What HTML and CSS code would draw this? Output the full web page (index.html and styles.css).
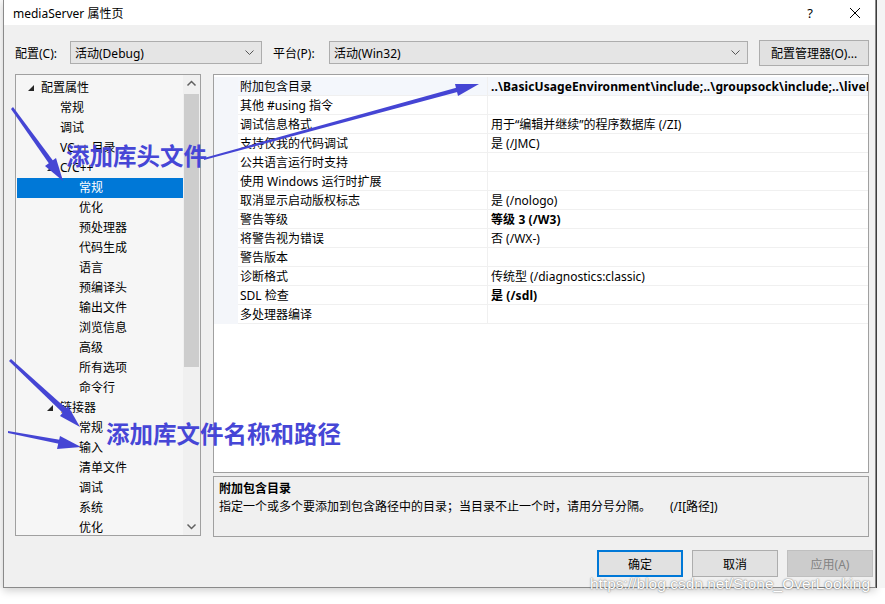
FILE: index.html
```html
<!DOCTYPE html>
<html lang="zh-CN">
<head>
    <meta charset="UTF-8">
    <title>mediaServer 属性页</title>
    <link rel="stylesheet" href="styles.css">
</head>
<body>
<div class="screen">
    <div class="backdrop-left"></div>

    <div class="window">
        <!-- title bar -->
        <div class="titlebar">
            <span class="title">mediaServer 属性页</span>
            <span class="title-help">?</span>
            <span class="title-close">
                <svg width="12" height="12" viewBox="0 0 12 12"><path d="M1 1 L11 11 M11 1 L1 11" stroke="#000" stroke-width="1"/></svg>
            </span>
        </div>

        <!-- config / platform row -->
        <div class="toolbar">
            <label class="field-label">配置(C):</label>
            <div class="combo combo-config">
                <span>活动(Debug)</span>
                <svg class="chevron" width="9" height="6" viewBox="0 0 9 6"><polyline points="0.5,0.5 4.5,4.5 8.5,0.5" fill="none" stroke="#555" stroke-width="1"/></svg>
            </div>
            <label class="field-label platform-label">平台(P):</label>
            <div class="combo combo-platform">
                <span>活动(Win32)</span>
                <svg class="chevron" width="9" height="6" viewBox="0 0 9 6"><polyline points="0.5,0.5 4.5,4.5 8.5,0.5" fill="none" stroke="#555" stroke-width="1"/></svg>
            </div>
            <button class="btn btn-manager">配置管理器(O)...</button>
        </div>

        <div class="main">
            <!-- tree -->
            <div class="tree">
                <div class="tree-list">
                    <div class="tree-item lvl1"><span class="caret"></span>配置属性</div>
                    <div class="tree-item lvl2">常规</div>
                    <div class="tree-item lvl2">调试</div>
                    <div class="tree-item lvl2">VC++ 目录</div>
                    <div class="tree-item lvl2"><span class="caret"></span>C/C++</div>
                    <div class="tree-item lvl3 selected">常规</div>
                    <div class="tree-item lvl3">优化</div>
                    <div class="tree-item lvl3">预处理器</div>
                    <div class="tree-item lvl3">代码生成</div>
                    <div class="tree-item lvl3">语言</div>
                    <div class="tree-item lvl3">预编译头</div>
                    <div class="tree-item lvl3">输出文件</div>
                    <div class="tree-item lvl3">浏览信息</div>
                    <div class="tree-item lvl3">高级</div>
                    <div class="tree-item lvl3">所有选项</div>
                    <div class="tree-item lvl3">命令行</div>
                    <div class="tree-item lvl2"><span class="caret"></span>链接器</div>
                    <div class="tree-item lvl3">常规</div>
                    <div class="tree-item lvl3">输入</div>
                    <div class="tree-item lvl3">清单文件</div>
                    <div class="tree-item lvl3">调试</div>
                    <div class="tree-item lvl3">系统</div>
                    <div class="tree-item lvl3">优化</div>
                </div>
                <div class="scrollbar">
                    <svg class="scroll-arrow" width="17" height="17" viewBox="0 0 17 17"><polyline points="4.5,10.5 8.5,6.5 12.5,10.5" fill="none" stroke="#606060" stroke-width="1.5"/></svg>
                    <div class="scroll-track"><div class="scroll-thumb"></div></div>
                    <svg class="scroll-arrow" width="17" height="17" viewBox="0 0 17 17"><polyline points="4.5,6.5 8.5,10.5 12.5,6.5" fill="none" stroke="#606060" stroke-width="1.5"/></svg>
                </div>
            </div>

            <div class="right">
                <!-- property grid -->
                <div class="grid">
                    <div class="prop-row selected"><span class="gutter"></span><span class="name">附加包含目录</span><span class="value bold">..\BasicUsageEnvironment\include;..\groupsock\include;..\liveMedia\include;..\UsageEnvironment\include</span></div>
                    <div class="prop-row"><span class="gutter"></span><span class="name">其他 #using 指令</span><span class="value"></span></div>
                    <div class="prop-row"><span class="gutter"></span><span class="name">调试信息格式</span><span class="value">用于“编辑并继续”的程序数据库 (/ZI)</span></div>
                    <div class="prop-row"><span class="gutter"></span><span class="name">支持仅我的代码调试</span><span class="value">是 (/JMC)</span></div>
                    <div class="prop-row"><span class="gutter"></span><span class="name">公共语言运行时支持</span><span class="value"></span></div>
                    <div class="prop-row"><span class="gutter"></span><span class="name">使用 Windows 运行时扩展</span><span class="value"></span></div>
                    <div class="prop-row"><span class="gutter"></span><span class="name">取消显示启动版权标志</span><span class="value">是 (/nologo)</span></div>
                    <div class="prop-row"><span class="gutter"></span><span class="name">警告等级</span><span class="value bold">等级 3 (/W3)</span></div>
                    <div class="prop-row"><span class="gutter"></span><span class="name">将警告视为错误</span><span class="value">否 (/WX-)</span></div>
                    <div class="prop-row"><span class="gutter"></span><span class="name">警告版本</span><span class="value"></span></div>
                    <div class="prop-row"><span class="gutter"></span><span class="name">诊断格式</span><span class="value">传统型 (/diagnostics:classic)</span></div>
                    <div class="prop-row"><span class="gutter"></span><span class="name">SDL 检查</span><span class="value bold">是 (/sdl)</span></div>
                    <div class="prop-row"><span class="gutter"></span><span class="name">多处理器编译</span><span class="value"></span></div>
                </div>

                <!-- description -->
                <div class="desc">
                    <div class="desc-title">附加包含目录</div>
                    <div class="desc-text">指定一个或多个要添加到包含路径中的目录；当目录不止一个时，请用分号分隔。<span class="desc-switch">(/I[路径])</span></div>
                </div>
            </div>
        </div>

        <div class="footer">
            <button class="btn btn-ok">确定</button>
            <button class="btn">取消</button>
            <button class="btn btn-disabled">应用(A)</button>
        </div>
    </div>

    <div class="backdrop-right"></div>

    <!-- annotations drawn on top of the screenshot -->
    <svg class="annotations" width="885" height="604" viewBox="0 0 885 604">
        <g fill="#4545d4" stroke="#4545d4">
            <polygon points="11,109 13,107 54,162 50,165" stroke="none"/>
            <polygon points="63,181 45,166 56,158" stroke="none"/>
            <polygon points="204,158 204,160 461,91 459,87" stroke="none"/>
            <polygon points="479,84 458,96 455,84" stroke="none"/>
            <polygon points="9,361 11,359 68,410 64,414" stroke="none"/>
            <polygon points="80,427 60,416 68,406" stroke="none"/>
            <polygon points="8,431 8,433 60,444 61,440" stroke="none"/>
            <polygon points="81,447 57,449 60,436" stroke="none"/>
        </g>
        <text class="note" x="66" y="165">添加库头文件</text>
        <text class="note" x="106" y="443">添加库文件名称和路径</text>
    </svg>

    <div class="watermark">https://blog.csdn.net/Stone_OverLooking</div>
</div>
</body>
</html>
```

FILE: styles.css
```css
body {
    margin: 0;
    background-color: #ffffff;
    font-family: "Segoe UI", "Noto Sans", "Noto Sans CJK SC", sans-serif;
    font-size: 12px;
    color: #000;
}

.screen {
    position: relative;
    width: 885px;
    height: 604px;
    display: flex;
    overflow: hidden;
}

.backdrop-left {
    width: 3px;
    height: 588px;
    background: #fafafa;
}

.backdrop-right {
    width: 8px;
    height: 588px;
    background: #f4f4f4;
    border-left: 1px solid #3c3c3c;
}

.window {
    width: 873px;
    height: 587px;
    background-color: #f0f0f0;
    border: 1px solid #8a8a8a;
    border-top: none;
    box-shadow: 0 3px 8px rgba(0, 0, 0, 0.18);
    display: flex;
    flex-direction: column;
}

/* title bar */
.titlebar {
    height: 25px;
    background: #ffffff;
    display: flex;
    align-items: center;
    padding-left: 9px;
    font-size: 12px;
}

.title {
    flex: 1;
}

.title-help {
    width: 14px;
    font-size: 13px;
    margin-right: 32px;
    text-align: center;
}

.title-close {
    width: 12px;
    height: 12px;
    margin-right: 14px;
    display: flex;
}

/* toolbar */
.toolbar {
    margin-top: 15px;
    height: 25px;
    display: flex;
    align-items: center;
    padding-left: 11px;
}

.field-label {
    width: 55px;
}

.platform-label {
    margin-left: 11px;
    width: 56px;
}

.combo {
    height: 23px;
    box-sizing: border-box;
    border: 1px solid #adadad;
    background: #e5e5e5;
    display: flex;
    align-items: center;
    padding-left: 4px;
    padding-right: 7px;
}

.combo span {
    flex: 1;
}

.combo-config {
    width: 192px;
}

.combo-platform {
    width: 419px;
}

.btn {
    font-family: "Segoe UI", "Noto Sans", "Noto Sans CJK SC", sans-serif;
    font-size: 12px;
    height: 27px;
    box-sizing: border-box;
    background: #e1e1e1;
    border: 1px solid #adadad;
    padding: 0;
    color: #000;
}

.btn-manager {
    margin-left: 11px;
    width: 110px;
    height: 26px;
}

/* main area */
.main {
    margin-top: 9px;
    margin-left: 11px;
    display: flex;
    gap: 12px;
}

.tree {
    width: 186px;
    height: 462px;
    box-sizing: border-box;
    border: 1px solid #a0a0a0;
    background: #f6f6f6;
    display: flex;
}

.tree-list {
    flex: 1;
    padding-top: 3px;
    overflow: hidden;
}

.tree-item {
    height: 20px;
    line-height: 20px;
    white-space: nowrap;
    position: relative;
    margin-left: 1px;
}

.lvl1 {
    padding-left: 24px;
}

.lvl2 {
    padding-left: 43px;
}

.lvl3 {
    padding-left: 62px;
}

.tree-item.selected {
    background: #0078d7;
    color: #fff;
}

.caret {
    position: absolute;
    top: 7px;
    width: 0;
    height: 0;
    border-left: 6px solid transparent;
    border-bottom: 6px solid #262626;
}

.lvl1 .caret {
    left: 11px;
}

.lvl2 .caret {
    left: 30px;
}

.scrollbar {
    width: 17px;
    background: #f0f0f0;
    display: flex;
    flex-direction: column;
}

.scroll-arrow {
    display: block;
    flex-shrink: 0;
}

.scroll-track {
    flex: 1;
    padding: 2px 1px;
}

.scroll-thumb {
    height: 273px;
    background: #cdcdcd;
}

.right {
    width: 656px;
    display: flex;
    flex-direction: column;
}

/* property grid */
.grid {
    height: 399px;
    box-sizing: border-box;
    border: 1px solid #a0a0a0;
    background: #ffffff;
    padding-top: 2px;
    overflow: hidden;
}

.prop-row {
    display: grid;
    grid-template-columns: 24px 250px 1fr;
    height: 19px;
    line-height: 20px;
}

.gutter {
    background: #f4f6fa;
}

.name,
.value {
    border-bottom: 1px solid #f0f0f0;
    white-space: nowrap;
    overflow: hidden;
}

.name {
    padding-left: 2px;
    border-right: 1px solid #f0f0f0;
}

.value {
    padding-left: 3px;
}

.value.bold {
    letter-spacing: 0.1px;
}

.prop-row.selected .name,
.prop-row.selected .value {
    background: #f4f7fc;
}

.bold {
    font-weight: bold;
}

/* description */
.desc {
    margin-top: 3px;
    height: 61px;
    box-sizing: border-box;
    border: 1px solid #a0a0a0;
    background: #f0f0f0;
    padding: 3px 5px;
    line-height: 18px;
}

.desc-title {
    font-weight: bold;
}

.desc-switch {
    margin-left: 19px;
}

/* footer */
.footer {
    margin-top: 13px;
    display: flex;
    justify-content: flex-end;
    gap: 9px;
    padding-right: 2px;
}

.footer .btn {
    width: 86px;
}

.btn-ok {
    border: 2px solid #0078d7;
}

.btn-disabled {
    background: #cccccc;
    border-color: #bfbfbf;
    color: #838383;
}

/* annotation overlay */
.annotations {
    position: absolute;
    top: 0;
    left: 0;
    pointer-events: none;
}

.note {
    font-family: "Noto Sans CJK SC", sans-serif;
    font-weight: bold;
    font-size: 23.5px;
    fill: #4646d6;
}

.watermark {
    position: absolute;
    left: 590px;
    top: 575px;
    font-family: "Liberation Sans", Arial, sans-serif;
    font-size: 15.5px;
    color: #ffffff;
    text-shadow: 0 0 2px rgba(0, 0, 0, 0.45), 0 0 1px rgba(0, 0, 0, 0.35);
    white-space: nowrap;
}
```
